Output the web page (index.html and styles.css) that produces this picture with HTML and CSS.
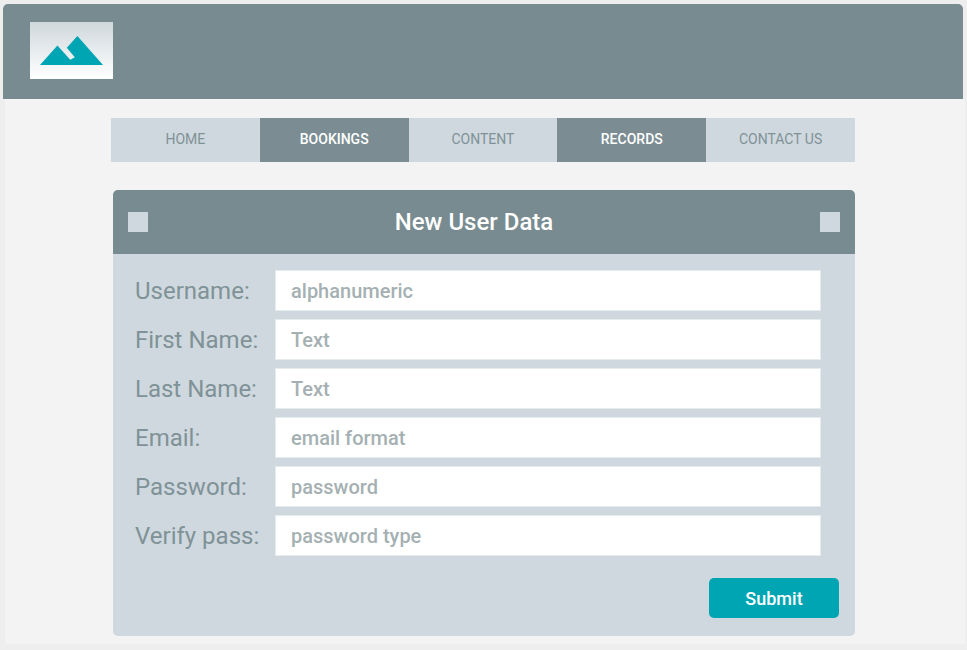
FILE: index.html
```html
<!DOCTYPE html>
<html lang="en">
<head>
  <meta charset="utf-8">
  <meta name="viewport" content="width=device-width, initial-scale=1">
  <title>New User Data</title>
  <link rel="stylesheet" href="styles.css">
</head>
<body>
  <header class="site-header">
    <a class="logo" href="#" aria-label="Home page">
      <svg viewBox="0 0 83 57" aria-hidden="true">
        <path d="M10 43 L27.4 23.6 L40.3 37.8 L44.8 35.3 L36.8 25.7 L47.4 14 L73 43 Z"/>
      </svg>
    </a>
  </header>
  <main class="page">
    <nav class="tabs">
      <a class="tab" href="#">HOME</a>
      <a class="tab tab-dark" href="#">BOOKINGS</a>
      <a class="tab" href="#">CONTENT</a>
      <a class="tab tab-dark" href="#">RECORDS</a>
      <a class="tab" href="#">CONTACT US</a>
    </nav>
    <section class="card">
      <div class="card-header">
        <span class="square"></span>
        <h1 class="card-title">New User Data</h1>
        <span class="square"></span>
      </div>
      <form class="form">
        <div class="fields">
          <label for="username">Username:</label>
          <input id="username" type="text" placeholder="alphanumeric">
          <label for="first-name">First Name:</label>
          <input id="first-name" type="text" placeholder="Text">
          <label for="last-name">Last Name:</label>
          <input id="last-name" type="text" placeholder="Text">
          <label for="email">Email:</label>
          <input id="email" type="email" placeholder="email format">
          <label for="password">Password:</label>
          <input id="password" type="password" placeholder="password">
          <label for="verify">Verify pass:</label>
          <input id="verify" type="password" placeholder="password type">
        </div>
        <button class="submit" type="submit">Submit</button>
      </form>
    </section>
  </main>
</body>
</html>
```
FILE: styles.css
```css
* {
  box-sizing: border-box;
}

body {
  margin: 0;
  padding: 4px 2px 6px 3px;
  background: #eeeeee;
  font-family: Roboto, sans-serif;
}

.site-header {
  margin-right: 2px;
  padding: 18px 27px 20px;
  background: #788b90;
  border-radius: 5px 5px 0 0;
}

.logo {
  display: block;
  width: 83px;
  height: 57px;
  background: linear-gradient(#cfd8dc, #ffffff);
}

.logo svg {
  display: block;
  fill: #00a5b3;
}

.page {
  margin-left: 2px;
  padding: 19px 110px 8px 106px;
  background: #f3f3f3;
}

.tabs {
  display: grid;
  grid-template-columns: repeat(5, 1fr);
}

.tab {
  padding: 9px 0 11px;
  background: #cfd8de;
  color: #7f9297;
  font-size: 14px;
  line-height: 24px;
  text-align: center;
  text-decoration: none;
}

.tab-dark {
  background: #7b8d92;
  color: #ffffff;
  font-weight: 500;
}

.card {
  margin: 28px 0 0 2px;
  background: #cfd8de;
  border-radius: 5px;
  overflow: hidden;
}

.card-header {
  display: flex;
  align-items: center;
  padding: 16px 15px;
  background: #788b90;
}

.square {
  width: 20px;
  height: 20px;
  background: #cfd8de;
}

.card-title {
  flex: 1;
  margin: 0;
  padding-right: 20px;
  color: #ffffff;
  font-size: 24px;
  font-weight: 500;
  line-height: 32px;
  text-align: center;
}

.form {
  padding: 16px 16px 18px 22px;
}

.fields {
  display: grid;
  grid-template-columns: 140px 1fr;
  row-gap: 8px;
  align-items: center;
  margin-right: 18px;
}

.fields label {
  color: #7f9297;
  font-size: 24px;
  line-height: 32px;
}

.fields input {
  width: 100%;
  height: 41px;
  padding: 0 15px;
  border: 1px solid #e6ebee;
  border-radius: 0;
  background: #ffffff;
  color: #5f7076;
  font: 500 20px Roboto, sans-serif;
}

.fields input::placeholder {
  color: #a5b0b3;
  opacity: 1;
}

.submit {
  display: block;
  width: 130px;
  height: 40px;
  margin: 22px 0 0 auto;
  padding: 0;
  border: 0;
  border-radius: 5px;
  background: #00a5b3;
  color: #ffffff;
  font: 500 18px Roboto, sans-serif;
}
```
